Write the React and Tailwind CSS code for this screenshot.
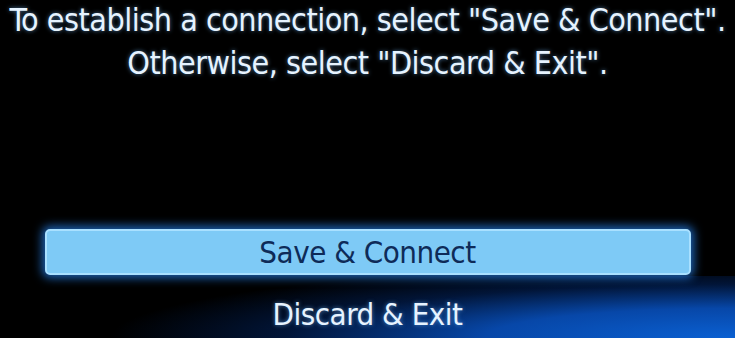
export default function App() {
  return (
    <div
      className="relative w-[735px] h-[338px] overflow-hidden bg-black flex flex-col items-center"
      style={{ fontFamily: '"DejaVu Sans Condensed", "DejaVu Sans", sans-serif' }}
    >
      {/* bottom blue glow */}
      <div className="absolute left-0 right-0 bottom-0 h-[62px] bg-[radial-gradient(ellipse_85%_120%_at_100%_100%,#0a60d2_0%,#0747a8_40%,rgba(2,30,80,0.7)_72%,transparent_100%)]" />

      <div className="relative -mt-[1px] text-center text-[32px] leading-[43px] tracking-[-0.5px] text-[#e6f3ff] [text-shadow:0_0_4px_rgba(120,190,255,0.6)]">
        <p>To establish a connection, select "Save &amp; Connect".</p>
        <p>Otherwise, select "Discard &amp; Exit".</p>
      </div>

      <div className="relative mt-[144px] w-[646px] h-[46px] rounded-[5px] border-2 border-[#a9e0ff] bg-[#7ecaf6] shadow-[0_0_10px_3px_rgba(40,140,255,0.7)] flex items-center justify-center">
        <span className="text-[31px] leading-[40px] tracking-[-0.5px] text-[#0e2b58]">Save &amp; Connect</span>
      </div>

      <div className="relative mt-[18px] text-[31px] leading-[43px] tracking-[-0.5px] text-[#e6f3ff] [text-shadow:0_0_4px_rgba(120,190,255,0.6)]">
        Discard &amp; Exit
      </div>
    </div>
  )
}
